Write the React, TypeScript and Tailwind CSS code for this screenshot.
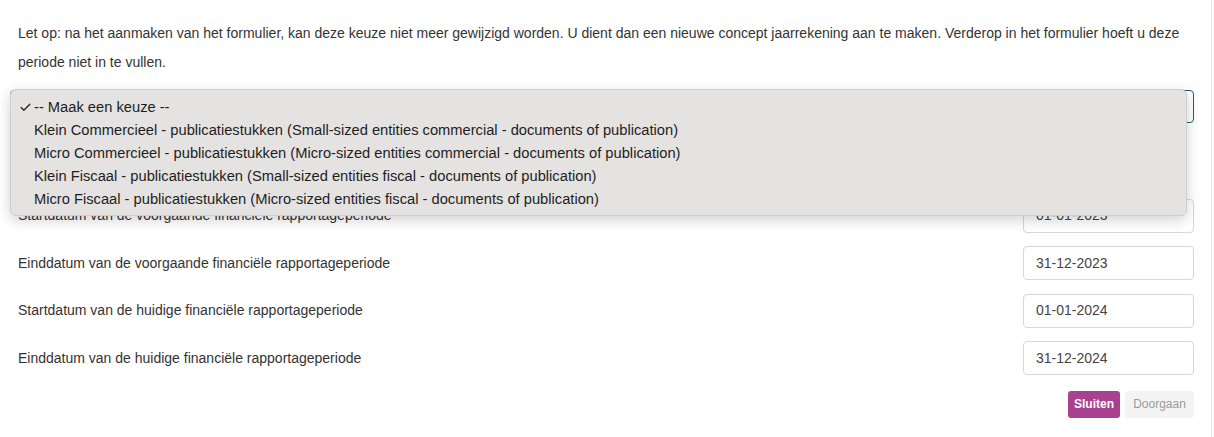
import { Check } from "lucide-react";

const options = [
    "-- Maak een keuze --",
    "Klein Commercieel - publicatiestukken (Small-sized entities commercial - documents of publication)",
    "Micro Commercieel - publicatiestukken (Micro-sized entities commercial - documents of publication)",
    "Klein Fiscaal - publicatiestukken (Small-sized entities fiscal - documents of publication)",
    "Micro Fiscaal - publicatiestukken (Micro-sized entities fiscal - documents of publication)",
];

const periods = [
    { label: "Startdatum van de voorgaande financiële rapportageperiode", value: "01-01-2023" },
    { label: "Einddatum van de voorgaande financiële rapportageperiode", value: "31-12-2023" },
    { label: "Startdatum van de huidige financiële rapportageperiode", value: "01-01-2024" },
    { label: "Einddatum van de huidige financiële rapportageperiode", value: "31-12-2024" },
];

export default function App() {
    return (
        <div className="w-[1214px] h-[437px] bg-white flex font-['Liberation_Sans',Arial,sans-serif] text-[14px] text-[#333]">
            <div className="relative flex-1 border-r border-[#e6e6e6] pl-[18px] pr-[17px] pt-[19px]">
                <p className="leading-[29px]">
                    Let op: na het aanmaken van het formulier, kan deze keuze niet meer gewijzigd worden. U dient dan een nieuwe concept jaarrekening aan te maken. Verderop in het formulier hoeft u deze periode niet in te vullen.
                </p>

                {/* Form type select (opened) */}
                <div className="mt-[13px] ml-[-8px] h-[33px] rounded-[4px] border border-[#1f5b80] bg-white"></div>

                {/* Period dates */}
                <div className="mt-[76px] flex flex-col gap-[14.5px]">
                    {periods.map((p) => (
                        <div key={p.label} className="flex items-center justify-between h-[33px]">
                            <span>{p.label}</span>
                            <div className="w-[171px] h-[34px] rounded-[4px] border border-[#d4d7db] bg-white flex items-center px-[12px] text-[#444]">
                                {p.value}
                            </div>
                        </div>
                    ))}
                </div>

                <div className="mt-[16px] flex justify-end gap-[5px] text-[12px]">
                    <button className="h-[27px] w-[52px] rounded-[3px] bg-[#a8418f] text-white font-bold">
                        Sluiten
                    </button>
                    <button className="h-[27px] w-[69px] rounded-[3px] bg-[#f4f4f4] text-[#9a9a9a]">
                        Doorgaan
                    </button>
                </div>

                {/* Native select popup */}
                <div className="absolute left-[10px] top-[89px] w-[1177px] rounded-[6px] border border-[#cfcecd] bg-[#e4e3e2] pt-[6px] pb-[4px] shadow-[0_4px_14px_rgba(0,0,0,0.18)] text-[14.7px] text-[#1e1e1e]">
                    {options.map((o, i) => (
                        <div key={o} className="relative h-[23px] leading-[23px] pl-[23px]">
                            {i === 0 && (
                                <Check className="absolute left-[8px] top-[5px] w-[13px] h-[13px]" strokeWidth={2.2} />
                            )}
                            {o}
                        </div>
                    ))}
                </div>
            </div>
            <div className="w-[2px]"></div>
        </div>
    );
}
